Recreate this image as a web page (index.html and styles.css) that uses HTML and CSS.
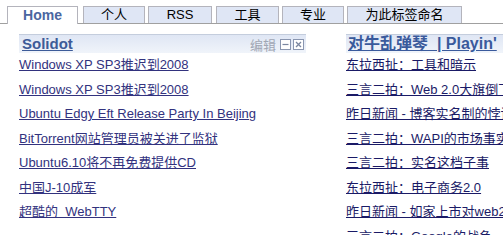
FILE: index.html
```html
<!DOCTYPE html>
<html>
<head>
<meta charset="utf-8">
<link rel="stylesheet" href="styles.css">
</head>
<body>
<div class="tabs">
  <div class="tab active">Home</div>
  <div class="tab t-personal">个人</div>
  <div class="tab t-rss">RSS</div>
  <div class="tab t-tools">工具</div>
  <div class="tab t-pro">专业</div>
  <div class="tab t-name">为此标签命名</div>
</div>
<div class="columns">
  <div class="col left">
    <div class="head">
      <a class="title">Solidot</a>
      <span class="tools">
        <span class="edit">编辑</span>
        <span class="btn"><svg width="11" height="11" viewBox="0 0 11 11"><rect x="0.5" y="0.5" width="10" height="10" fill="#fff" stroke="#8a96b0"/><path d="M2.5 5.5h6" stroke="#7a86a0" stroke-width="1.2"/></svg></span>
        <span class="btn"><svg width="11" height="11" viewBox="0 0 11 11"><rect x="0.5" y="0.5" width="10" height="10" fill="#fff" stroke="#8a96b0"/><path d="M3 3l5 5M8 3l-5 5" stroke="#7a86a0" stroke-width="1.3"/></svg></span>
      </span>
    </div>
    <ul class="list">
      <li><a>Windows XP SP3推迟到2008</a></li>
      <li><a>Windows XP SP3推迟到2008</a></li>
      <li><a>Ubuntu Edgy Eft Release Party In Beijing</a></li>
      <li><a>BitTorrent网站管理员被关进了监狱</a></li>
      <li><a>Ubuntu6.10将不再免费提供CD</a></li>
      <li><a>中国J-10成军</a></li>
      <li><a>超酷的&nbsp; WebTTY</a></li>
    </ul>
  </div>
  <div class="col right">
    <div class="head">
      <a class="title big">对牛乱弹琴&nbsp; | Playin'</a>
    </div>
    <ul class="list dark">
      <li><a>东拉西扯：工具和暗示</a></li>
      <li><a>三言二拍：Web 2.0大旗倒下</a></li>
      <li><a>昨日新闻 - 博客实名制的悖论</a></li>
      <li><a>三言二拍：WAPI的市场事实</a></li>
      <li><a>三言二拍：实名这档子事</a></li>
      <li><a>东拉西扯：电子商务2.0</a></li>
      <li><a>昨日新闻 - 如家上市对web2.0</a></li>
      <li><a>三言二拍：Google的战争</a></li>
    </ul>
  </div>
</div>
</body>
</html>
```

FILE: styles.css
```css
html, body {
  margin: 0;
  padding: 0;
  background: #fff;
  overflow: hidden;
}
body {
  width: 503px;
  height: 235px;
  font-family: "Liberation Sans", Arial, "Noto Sans CJK SC", sans-serif;
  font-size: 13px;
  color: #000;
}
.tabs {
  display: flex;
  align-items: flex-end;
  padding: 6px 0 0 7px;
  height: 17px;
  border-bottom: 1px solid #a0a0a0;
}
.tab {
  box-sizing: border-box;
  height: 17px;
  border: 1px solid #b4b4bc;
  border-bottom: none;
  background: #dfe6f5;
  text-align: center;
  font-size: 13px;
  line-height: 16px;
  margin-right: 3px;
}
.tab.active {
  width: 71px;
  height: 18px;
  margin-bottom: -1px;
  background: #fff;
  color: #4a66a0;
  font-weight: bold;
  font-size: 14px;
  margin-right: 5px;
}
.t-personal { width: 62px; }
.t-rss { width: 64px; margin-right: 4px; }
.t-tools { width: 63px; }
.t-pro { width: 62px; }
.t-name { width: 115px; }
.columns {
  display: flex;
  padding: 10px 0 0 19px;
}
.col.left {
  width: 287px;
  flex: none;
}
.col.right {
  margin-left: 40px;
  flex: none;
  width: 157px;
  white-space: nowrap;
  overflow: hidden;
}
.head {
  display: flex;
  align-items: center;
  height: 18px;
  border-top: 1px solid #c4cddd;
  background: linear-gradient(#dfe6f4, #f0f4fa);
  padding-left: 3px;
}
.right .head {
  padding-left: 2px;
}
.title {
  color: #3d5b98;
  font-weight: bold;
  font-size: 15px;
  text-decoration: underline;
  line-height: 18px;
}
.title.big {
  font-size: 16px;
  color: #3a5a9c;
}
.tools {
  margin-left: auto;
  display: flex;
  align-items: center;
  gap: 2px;
  padding-right: 2px;
}
.edit {
  color: #a0a6b4;
  font-size: 13px;
  margin-right: 2px;
}
.btn {
  display: flex;
}
.list {
  list-style: none;
  margin: 0;
  padding: 0;
}
.list li {
  height: 24.5px;
  line-height: 24.5px;
  white-space: nowrap;
}
.list a {
  color: #32327e;
  text-decoration: underline;
}
.list.dark a {
  color: #1a1a66;
}
```
